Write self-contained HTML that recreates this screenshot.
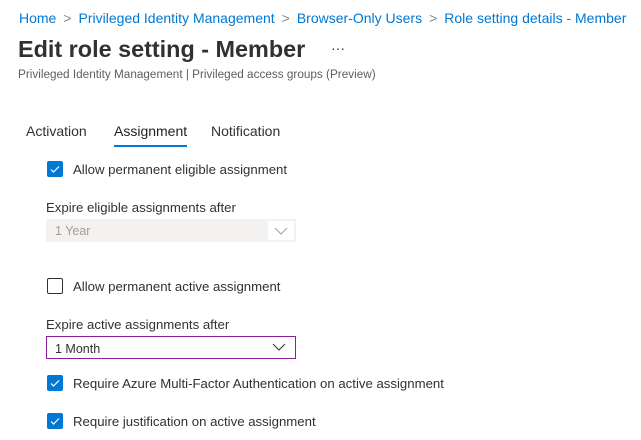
<html><head><style>
body{margin:0;width:641px;height:440px;background:#fff;font-family:"Liberation Sans",sans-serif;position:relative;overflow:hidden;color:#323130}
.a{position:absolute;white-space:nowrap}
.bc{top:10px;left:19px;font-size:14px;color:#0078d4}
.bc span{color:#8a8886;margin:0 7px}
.cb{position:absolute;left:47px;width:16px;height:16px;border-radius:2px;box-sizing:border-box}
.on{background:#0078d4}
.off{border:1px solid #323130}
.lbl{left:73px;font-size:13.2px}
.dd{position:absolute;left:46px;width:250px;height:23px;box-sizing:border-box;font-size:12.5px}
</style></head><body>
<div class="a bc">Home<span>&gt;</span>Privileged Identity Management<span>&gt;</span>Browser-Only Users<span>&gt;</span>Role setting details - Member</div>
<div class="a" style="top:36px;left:18px;font-size:23.4px;font-weight:bold;color:#323130">Edit role setting - Member</div>
<div class="a" style="top:40px;left:331px;font-size:14px">···</div>
<div class="a" style="top:68px;left:18px;font-size:11.75px;color:#605e5c">Privileged Identity Management | Privileged access groups (Preview)</div>
<div class="a" style="top:123px;left:26px;font-size:14px">Activation</div>
<div class="a" style="top:123px;left:114px;font-size:14px;color:#201f1e">Assignment</div>
<div class="a" style="top:145px;left:114px;width:73px;height:2px;background:#0078d4"></div>
<div class="a" style="top:123px;left:211px;font-size:14px">Notification</div>

<div class="cb on" style="top:161px"><svg width="16" height="16"><path d="M4 8.5l2.5 2.5 5.5-5.5" stroke="#fff" stroke-width="1.2" fill="none"/></svg></div>
<div class="a lbl" style="top:162px">Allow permanent eligible assignment</div>
<div class="a" style="top:200px;left:46px;font-size:13.2px">Expire eligible assignments after</div>
<div class="dd" style="top:219px;background:#f3f2f1;color:#a19f9d;padding:5px 9px">1 Year</div>
<div class="a" style="top:221px;left:268px;width:26px;height:19px;background:#fff"><svg width="26" height="19"><path d="M7 7l6 6 6-6" stroke="#a19f9d" fill="none"/></svg></div>

<div class="cb off" style="top:278px"></div>
<div class="a lbl" style="top:279px">Allow permanent active assignment</div>
<div class="a" style="top:317px;left:46px;font-size:13.2px">Expire active assignments after</div>
<div class="dd" style="top:336px;border:1px solid #8a1f9e;padding:5px 8px;color:#323130">1 Month<svg style="position:absolute;right:9px;top:4px" width="14" height="12"><path d="M1 3l6 6 6-6" stroke="#323130" fill="none"/></svg></div>

<div class="cb on" style="top:375px"><svg width="16" height="16"><path d="M4 8.5l2.5 2.5 5.5-5.5" stroke="#fff" stroke-width="1.2" fill="none"/></svg></div>
<div class="a lbl" style="top:376px">Require Azure Multi-Factor Authentication on active assignment</div>
<div class="cb on" style="top:413px"><svg width="16" height="16"><path d="M4 8.5l2.5 2.5 5.5-5.5" stroke="#fff" stroke-width="1.2" fill="none"/></svg></div>
<div class="a lbl" style="top:414px">Require justification on active assignment</div>
</body></html>
